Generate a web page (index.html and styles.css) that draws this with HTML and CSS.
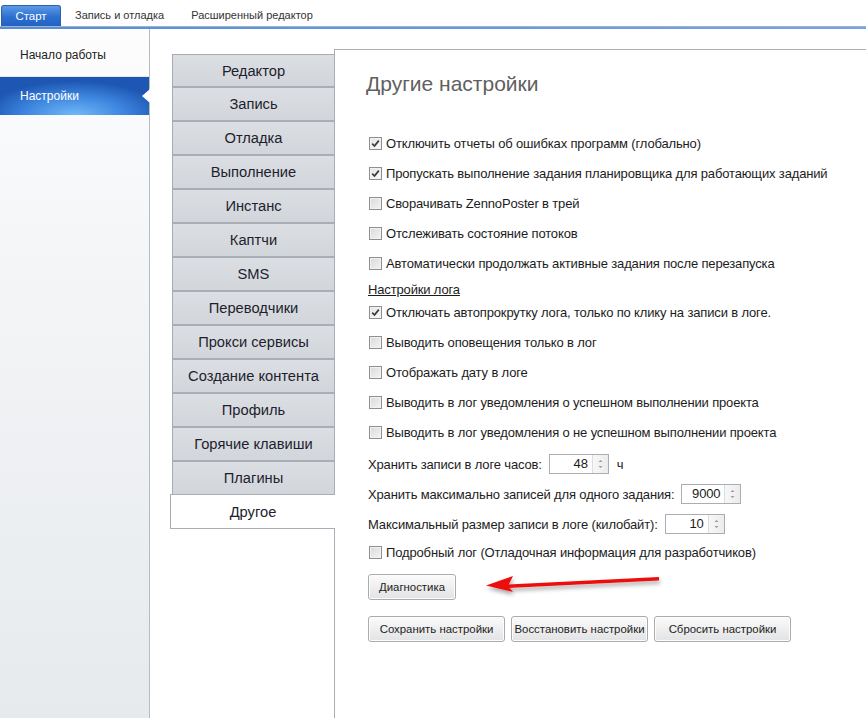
FILE: index.html
```html
<!DOCTYPE html>
<html lang="ru">
<head>
<meta charset="utf-8">
<title>Настройки</title>
<link rel="stylesheet" href="styles.css">
</head>
<body>
<div class="app">
  <header class="ribbon">
    <div class="rtab active">Старт</div>
    <div class="rtab">Запись и отладка</div>
    <div class="rtab">Расширенный редактор</div>
  </header>
  <div class="ribbon-line"></div>
  <div class="body">
    <aside class="side">
      <div class="side-item first">Начало работы</div>
      <div class="side-item sel">Настройки<span class="notch"></span></div>
    </aside>
    <main class="work">
      <nav class="vtabs">
        <div class="vtab top">Редактор</div>
        <div class="vtab">Запись</div>
        <div class="vtab">Отладка</div>
        <div class="vtab">Выполнение</div>
        <div class="vtab">Инстанс</div>
        <div class="vtab">Каптчи</div>
        <div class="vtab">SMS</div>
        <div class="vtab">Переводчики</div>
        <div class="vtab">Прокси сервисы</div>
        <div class="vtab">Создание контента</div>
        <div class="vtab">Профиль</div>
        <div class="vtab">Горячие клавиши</div>
        <div class="vtab">Плагины</div>
        <div class="vtab active">Другое</div>
      </nav>
      <section class="panel">
        <h1 class="title">Другие настройки</h1>
        <div class="group">
          <label class="row"><span class="cb on"><svg viewBox="0 0 9 9" width="9" height="9"><path d="M1.2 4.6 L3.5 7 L7.8 1.6" fill="none" stroke="#3a3a3a" stroke-width="1.7"/></svg></span>Отключить отчеты об ошибках программ (глобально)</label>
          <label class="row"><span class="cb on"><svg viewBox="0 0 9 9" width="9" height="9"><path d="M1.2 4.6 L3.5 7 L7.8 1.6" fill="none" stroke="#3a3a3a" stroke-width="1.7"/></svg></span>Пропускать выполнение задания планировщика для работающих заданий</label>
          <label class="row"><span class="cb"></span>Сворачивать ZennoPoster в трей</label>
          <label class="row"><span class="cb"></span>Отслеживать состояние потоков</label>
          <label class="row"><span class="cb"></span>Автоматически продолжать активные задания после перезапуска</label>
        </div>
        <div class="section-label">Настройки лога</div>
        <div class="group">
          <label class="row"><span class="cb on"><svg viewBox="0 0 9 9" width="9" height="9"><path d="M1.2 4.6 L3.5 7 L7.8 1.6" fill="none" stroke="#3a3a3a" stroke-width="1.7"/></svg></span>Отключать автопрокрутку лога, только по клику на записи в логе.</label>
          <label class="row"><span class="cb"></span>Выводить оповещения только в лог</label>
          <label class="row"><span class="cb"></span>Отображать дату в логе</label>
          <label class="row"><span class="cb"></span>Выводить в лог уведомления о успешном выполнении проекта</label>
          <label class="row"><span class="cb"></span>Выводить в лог уведомления о не успешном выполнении проекта</label>
        </div>
        <div class="group spins">
          <div class="srow">Хранить записи в логе часов:<span class="spin"><span class="val">48</span><span class="arr"><svg viewBox="0 0 5 12" width="5" height="12"><path d="M0.5 4 L2.5 2 L4.5 4 Z M0.5 8 L2.5 10 L4.5 8 Z" fill="#9a9a9a"/></svg></span></span><span class="unit">ч</span></div>
          <div class="srow">Хранить максимально записей для одного задания:<span class="spin"><span class="val">9000</span><span class="arr"><svg viewBox="0 0 5 12" width="5" height="12"><path d="M0.5 4 L2.5 2 L4.5 4 Z M0.5 8 L2.5 10 L4.5 8 Z" fill="#9a9a9a"/></svg></span></span></div>
          <div class="srow">Максимальный размер записи в логе (килобайт):<span class="spin"><span class="val">10</span><span class="arr"><svg viewBox="0 0 5 12" width="5" height="12"><path d="M0.5 4 L2.5 2 L4.5 4 Z M0.5 8 L2.5 10 L4.5 8 Z" fill="#9a9a9a"/></svg></span></span></div>
        </div>
        <label class="row last"><span class="cb"></span>Подробный лог (Отладочная информация для разработчиков)</label>
        <div class="btn-line"><button class="btn diag">Диагностика</button></div>
        <div class="btn-line actions">
          <button class="btn wide">Сохранить настройки</button>
          <button class="btn wide">Восстановить настройки</button>
          <button class="btn wide">Сбросить настройки</button>
        </div>
      </section>
    </main>
  </div>
  <svg class="arrow" width="200" height="36" viewBox="0 0 200 36">
    <defs>
      <filter id="sh" x="-10%" y="-50%" width="120%" height="200%">
        <feDropShadow dx="1" dy="3" stdDeviation="2" flood-color="#000" flood-opacity="0.35"/>
      </filter>
    </defs>
    <g filter="url(#sh)">
      <path d="M28 18.5 L179 11 L179 14.5 L28 22 Z" fill="#ee1111"/>
      <path d="M6 19.5 L33 10 L28 20 L33 26 Z" fill="#ee1111"/>
    </g>
  </svg>
</div>
</body>
</html>
```
FILE: styles.css
```css
* { box-sizing: border-box; }
html, body { margin: 0; padding: 0; }
body {
  width: 866px;
  height: 718px;
  overflow: hidden;
  background: #fff;
  font-family: "Liberation Sans", Arial, sans-serif;
  color: #222;
}
.app {
  position: relative;
  width: 866px;
  height: 718px;
  display: flex;
  flex-direction: column;
}

/* ribbon */
.ribbon {
  height: 27px;
  display: flex;
  align-items: flex-end;
  padding-left: 1px;
  border-bottom: 1px solid #aab1bb;
  background: #fff;
}
.rtab {
  height: 21px;
  padding: 0 13px 0 14px;
  font-size: 11px;
  line-height: 21px;
  color: #333;
}
.rtab.active {
  width: 60px;
  padding: 0;
  text-align: center;
  font-size: 11.5px;
  color: #fff;
  background: linear-gradient(#5b9be6, #2d6fcf 55%, #2161c2);
  border: 1px solid #2c5fae;
  border-bottom: none;
  border-radius: 3px 3px 0 0;
  line-height: 20px;
}
.ribbon-line {
  height: 2px;
  background: linear-gradient(90deg, #4f8ee6, #6fa6ef);
}

.body {
  flex: 1;
  display: flex;
  min-height: 0;
}

/* left side */
.side {
  width: 150px;
  flex-shrink: 0;
  border-right: 1px solid #b6bbc2;
  background: linear-gradient(#fdfdfe, #f1f3f5 45%, #e7eaed);
}
.side-item {
  display: flex;
  align-items: center;
  padding-left: 20px;
  font-size: 12px;
}
.side-item.first {
  height: 48px;
  padding-top: 4px;
  color: #222;
  border-bottom: 1px solid #e3e6ea;
}
.side-item.sel {
  position: relative;
  height: 38px;
  color: #fff;
  background: radial-gradient(ellipse 90px 34px at 50% 100%, #72b8f7 0%, #3d86df 55%, #1d56b3 100%);
}
.notch {
  position: absolute;
  right: -1px;
  top: 12px;
  width: 0;
  height: 0;
  border-top: 7px solid transparent;
  border-bottom: 7px solid transparent;
  border-right: 8px solid #fff;
}

/* workspace */
.work {
  flex: 1;
  display: flex;
  padding: 20px 0 0 20px;
  background: #fff;
}
.vtabs {
  width: 164px;
  flex-shrink: 0;
  padding-top: 5px;
}
.vtab {
  height: 34px;
  margin-left: 2px;
  width: 162px;
  display: flex;
  align-items: center;
  justify-content: center;
  font-size: 14.7px;
  color: #1e1e2e;
  background: linear-gradient(#dbdee2, #d2d6db);
  border-left: 1px solid #a7acb4;
  border-bottom: 2px solid #a9aeb6;
}
.vtab.top { border-top: 1px solid #a7acb4; }
.vtab.active {
  position: relative;
  z-index: 1;
  margin-left: 0;
  width: 165px;
  margin-top: -2px;
  height: 35px;
  background: #fff;
  border-top: 1px solid #a9aeb6;
  border-bottom: 1px solid #a9aeb6;
}

.panel {
  flex: 1;
  border-top: 1px solid #a9adb4;
  border-left: 1px solid #a9adb4;
  padding: 22px 0 0 33px;
  font-size: 13px;
  letter-spacing: -0.15px;
  color: #1c1c1c;
}
.title {
  margin: 0 0 32px -2px;
  font-size: 21px;
  line-height: 24px;
  font-weight: normal;
  letter-spacing: 0;
  color: #5f6060;
}
.row {
  display: flex;
  align-items: center;
  height: 30px;
}
.cb {
  width: 13px;
  height: 13px;
  margin: 0 4px 0 1px;
  border: 1px solid #8f8f8f;
  background: linear-gradient(135deg, #d9d9d9, #f4f4f4);
  box-shadow: inset 0 0 0 1px #f2f2f2;
  display: flex;
  align-items: center;
  justify-content: center;
  flex-shrink: 0;
}
.cb.on { background: linear-gradient(135deg, #e4e4e4, #fafafa); }
.section-label {
  height: 19px;
  padding-top: 4px;
  line-height: 16px;
  text-decoration: underline;
}
.spins { margin-top: 2px; }
.srow {
  display: flex;
  align-items: center;
  height: 30px;
}
.spin {
  display: flex;
  width: 60px;
  height: 20px;
  margin-left: 7px;
  border: 1px solid #abadb3;
  background: #fff;
}
.val {
  flex: 1;
  text-align: right;
  padding-right: 4px;
  line-height: 18px;
  font-size: 13px;
}
.arr {
  width: 16px;
  border-left: 1px solid #dcdde0;
  display: flex;
  align-items: center;
  justify-content: center;
  background: linear-gradient(90deg, #f7f7f7, #ececec);
}
.unit { margin-left: 8px; }
.row.last { height: 26px; }

.btn-line { display: flex; gap: 6px; }
.btn {
  height: 26px;
  padding: 0;
  white-space: nowrap;
  font-family: "Liberation Sans", Arial, sans-serif;
  font-size: 11.4px;
  color: #222;
  border: 1px solid #a8abb0;
  border-radius: 3px;
  background: linear-gradient(#fbfbfb, #ececec 60%, #e2e3e5);
  box-shadow: inset 0 0 0 1px #fdfdfd;
}
.btn.diag { width: 88px; margin-top: 9px; }
.actions { margin-top: 16px; }
.btn.wide { width: 137px; }

.arrow {
  position: absolute;
  left: 480px;
  top: 566px;
}
```
